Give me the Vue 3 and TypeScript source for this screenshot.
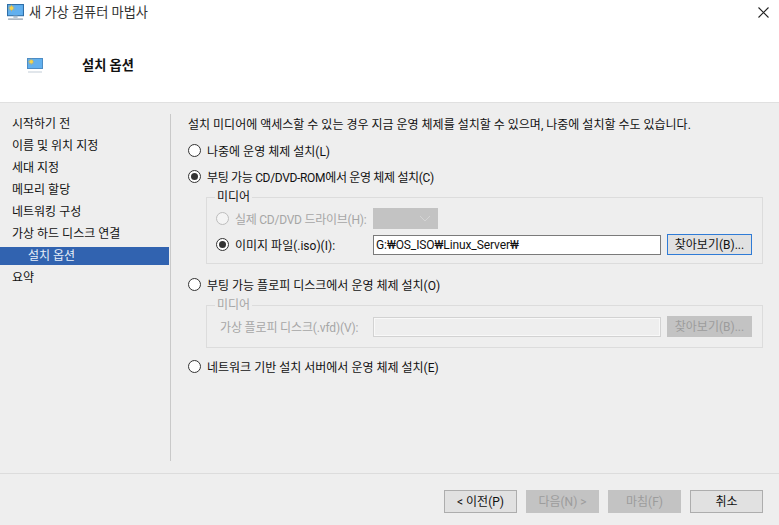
<script setup lang="ts">
const steps = ['시작하기 전', '이름 및 위치 지정', '세대 지정', '메모리 할당', '네트워킹 구성', '가상 하드 디스크 연결', '설치 옵션', '요약']
const active = '설치 옵션'
</script>

<template>
  <div class="win">
    <header class="head">
      <div class="title">
        <svg class="ico" viewBox="0 0 16 16" width="17" height="17">
          <rect x=".5" y=".5" width="15" height="10.5" fill="#62b0ee" stroke="#2f6fa8" stroke-width="1" />
          <path d="M4.2 .8V6.8M1.2 3.8H7.2M2.1 1.7L6.3 5.9M6.3 1.7L2.1 5.9" stroke="#e8b030" stroke-width=".7" />
          <circle cx="4.2" cy="3.8" r="1.8" fill="#f6d44c" />
          <rect x="6" y="11" width="4" height="2" fill="#a9bccc" />
          <rect x="1" y="13.5" width="14" height="1.5" fill="#a8b4c0" />
        </svg>
        <span>새 가상 컴퓨터 마법사</span>
        <svg class="close" viewBox="0 0 11 11" width="11" height="11">
          <path d="M.5 .5 L10.5 10.5 M10.5 .5 L.5 10.5" stroke="#222" stroke-width="1.1" fill="none" />
        </svg>
      </div>
      <div class="sub">
        <svg class="subico" viewBox="0 0 16 16" width="16" height="16">
          <rect x=".5" y=".5" width="15" height="10" fill="#62b0ee" stroke="#4d8cc4" stroke-width="1" />
          <path d="M4.2 .8V6.8M1.2 3.8H7.2M2.1 1.7L6.3 5.9M6.3 1.7L2.1 5.9" stroke="#e8b030" stroke-width=".7" />
          <circle cx="4.2" cy="3.8" r="1.8" fill="#f6d44c" />
          <rect x="1" y="13.5" width="14" height="1" fill="#c3ced8" />
        </svg>
        <strong>설치 옵션</strong>
      </div>
    </header>

    <div class="body">
      <nav class="side">
        <div v-for="s in steps" :key="s" class="step" :class="{ on: s === active }">{{ s }}</div>
      </nav>
      <main class="main">
        <p class="intro">설치 미디어에 액세스할 수 있는 경우 지금 운영 체제를 설치할 수 있으며, 나중에 설치할 수도 있습니다.</p>

        <div class="opt first"><i class="radio"></i><span>나중에 운영 체제 설치(L)</span></div>
        <div class="opt second"><i class="radio sel"></i><span class="tight">부팅 가능 CD/DVD-ROM에서 운영 체제 설치(C)</span></div>

        <fieldset class="group g1">
          <legend>미디어</legend>
          <div class="row r1">
            <label class="lab dim"><i class="radio dis"></i><span class="snug">실제 CD/DVD 드라이브(H):</span></label>
            <div class="select">
              <svg viewBox="0 0 12 7" width="12" height="7"><path d="M1 1 L6 6 L11 1" stroke="#d4d4d4" fill="none" /></svg>
            </div>
          </div>
          <div class="row r2">
            <label class="lab"><i class="radio sel"></i><span>이미지 파일(.iso)(I):</span></label>
            <div class="input path">G:₩OS_ISO₩Linux_Server₩</div>
            <button class="btn browse" type="button">찾아보기(B)...</button>
          </div>
        </fieldset>

        <div class="opt third"><i class="radio"></i><span>부팅 가능 플로피 디스크에서 운영 체제 설치(O)</span></div>

        <fieldset class="group g2 dimset">
          <legend>미디어</legend>
          <div class="row">
            <label class="lab dim plain"><span class="vfd">가상 플로피 디스크(.vfd)(V):</span></label>
            <div class="input off"></div>
            <button class="btn browse off" type="button">찾아보기(B)...</button>
          </div>
        </fieldset>

        <div class="opt fourth"><i class="radio"></i><span>네트워크 기반 설치 서버에서 운영 체제 설치(E)</span></div>
      </main>
    </div>

    <footer class="foot">
      <button class="btn wide" type="button">&lt; 이전(P)</button>
      <button class="btn wide off" type="button">다음(N) &gt;</button>
      <button class="btn wide off" type="button">마침(F)</button>
      <button class="btn wide" type="button">취소</button>
    </footer>
  </div>
</template>

<style scoped>
.win {
  width: 779px;
  height: 525px;
  display: flex;
  flex-direction: column;
  background: #eeeeee;
  color: #111;
  font-family: Roboto, "Noto Sans CJK KR", sans-serif;
  font-size: 12px;
  overflow: hidden;
}
.head {
  height: 102px;
  background: #fff;
  border-bottom: 1px solid #e0e0e0;
  box-sizing: content-box;
  flex: none;
}
.title {
  height: 23px;
  display: flex;
  align-items: center;
  padding: 0 10px 0 7px;
  gap: 5px;
  font-size: 13.2px;
  color: #333;
}
.ico { align-self: flex-start; margin-top: 4px; }
.close { margin-left: auto; margin-top: 2px; }
.sub {
  display: flex;
  align-items: center;
  margin-top: 32px;
  padding-left: 27px;
  height: 18px;
}
.subico { margin-top: 4px; }
.sub strong { margin-left: 39px; font-size: 13.2px; font-weight: 700; }
.body {
  flex: 1;
  display: flex;
  padding-top: 11px;
  min-height: 0;
}
.side {
  width: 170px;
  height: 346px;
  padding-top: 1px;
  flex: none;
  border-right: 1px solid #c9c9c9;
  box-sizing: content-box;
  display: flex;
  flex-direction: column;
  gap: 4px;
}
.step {
  height: 18px;
  line-height: 18px;
  padding-left: 12px;
  width: 169px;
  box-sizing: border-box;
}
.step.on {
  background: #3163b0;
  color: #e8eef8;
  padding-left: 28px;
}
.main { flex: 1; padding-left: 17px; }
.intro { margin: 0; height: 22px; line-height: 22px; white-space: nowrap; }
.radio {
  display: inline-block;
  width: 13px;
  height: 13px;
  box-sizing: border-box;
  border: 1px solid #333;
  border-radius: 50%;
  background: #fff;
  flex: none;
  position: relative;
}
.radio.sel::after {
  content: "";
  position: absolute;
  left: 2px;
  top: 2px;
  width: 7px;
  height: 7px;
  border-radius: 50%;
  background: #333;
}
.radio.dis { border-color: #bdbdbd; background: #f4f4f4; }
.opt {
  display: flex;
  align-items: center;
  gap: 6px;
  height: 18px;
  white-space: nowrap;
}
.tight { letter-spacing: -0.33px; }
.snug { letter-spacing: -0.25px; }
.vfd { letter-spacing: -0.15px; }
.first { margin-top: 5px; }
.second { margin-top: 8px; }
.third { margin-top: 11px; }
.fourth { margin-top: 9px; }
.group {
  margin: 0 0 0 18px;
  padding: 0;
  width: 557px;
  box-sizing: border-box;
  border: 1px solid #dcdcdc;
  min-width: 0;
}
.group legend { margin-left: 8px; padding: 0 2px; line-height: 16px; }
.g1 { height: 75px; margin-top: 4px; padding-top: 3px; }
.g2 { height: 51px; margin-top: 4px; padding-top: 3px; }
.dimset legend { color: #a6a6a6; }
.row {
  display: flex;
  align-items: center;
  padding-left: 9px;
}
.r1 { height: 21px; }
.r2 { height: 21px; margin-top: 5px; }
.lab {
  width: 157px;
  display: flex;
  align-items: center;
  flex: none;
  white-space: nowrap;
}
.lab span { margin-left: 1px; }
.lab .radio + span { margin-left: 6px; }
.lab.dim { color: #a6a6a6; }
.lab.plain { padding-left: 3px; width: 154px; }
.select {
  width: 65px;
  height: 21px;
  background: #c3c3c3;
  display: flex;
  align-items: center;
  justify-content: flex-end;
  padding-right: 7px;
  box-sizing: border-box;
}
.input {
  width: 288px;
  height: 20px;
  line-height: 18px;
  box-sizing: border-box;
  border: 1px solid #7a7a7a;
  background: #fff;
  padding-left: 2px;
  white-space: nowrap;
}
.path { letter-spacing: -0.1px; }
.input.off { background: #eeeeee; border: 1px solid #d2d2d2; box-shadow: inset 0 0 0 1px #f8f8f8; }
.btn {
  font: inherit;
  color: #111;
  padding: 0;
  background: #e1e1e1;
  border: 1px solid #adadad;
  box-sizing: border-box;
  white-space: nowrap;
}
.browse {
  width: 85px;
  height: 21px;
  margin-left: 6px;
  border-color: #2f7bd6;
  line-height: 1;
}
.btn.off { background: #c3c3c3; border-color: #c3c3c3; color: #9c9c9c; }
.foot {
  flex: none;
  height: 35px;
  border-top: 1px solid #dcdcdc;
  display: flex;
  gap: 9px;
  justify-content: flex-end;
  padding: 16px 16px 0 0;
  box-sizing: content-box;
}
.wide { width: 73px; height: 23px; line-height: 1; }
</style>

<style>
html, body { margin: 0; background: #eeeeee; }
</style>
